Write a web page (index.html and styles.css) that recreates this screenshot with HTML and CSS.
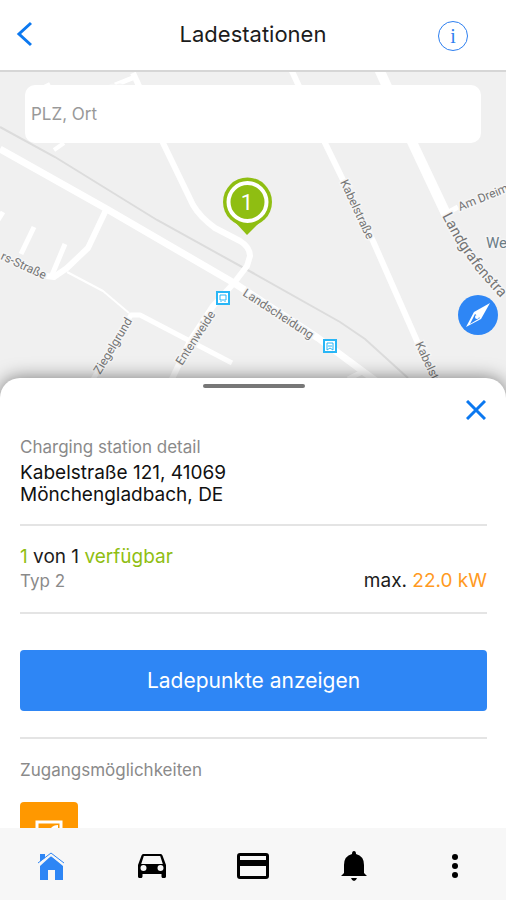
FILE: index.html
```html
<!DOCTYPE html>
<html lang="de">
<head>
  <meta charset="UTF-8">
  <meta name="viewport" content="width=device-width, initial-scale=1.0">
  <title>Ladestationen</title>
  <link rel="stylesheet" href="styles.css">
</head>

<body>

  <header class="topbar">
    <button class="icon-btn back" aria-label="Zurück">
      <svg width="16" height="26" viewBox="0 0 16 26"><path d="M15 2 L3 13 L15 24" fill="none" stroke="#0b78f0" stroke-width="3"/></svg>
    </button>
    <h1>Ladestationen</h1>
    <button class="icon-btn info" aria-label="Info">i</button>
  </header>

  <main>
    <section class="map">
      <svg class="map-canvas" viewBox="0 71 506 330" preserveAspectRatio="xMidYMin slice">
        <!-- Bahnlinie -->
        <path class="rail" d="M0 126 L55 156 L157 219 L253 272 L340 321 L365 338 L408 377"/>

        <!-- Straßen -->
        <g class="roads">
          <path d="M0 148 L105 207 L234 282 L318 337 L380 383" stroke-width="7"/>
          <path d="M133 72 L139 85 L164 144 L193 204 Q200 216 215 227 L240 240 Q250 246 250 255 L247 265 L234 282 L213 305 L190 340 L171 380" stroke-width="6"/>
          <path d="M106 209 L88 247 L67 267 L54 276 L46 275" stroke-width="6"/>
          <path d="M65 243 L52 274" stroke-width="5"/>
          <path d="M34 226 L21 253" stroke-width="5"/>
          <path d="M3 211 L-2 219" stroke-width="5"/>
          <path d="M67 271 L103 290 L129 312" stroke-width="2"/>
          <path d="M92 380 L131 314 L140 314 L232 362" stroke-width="5"/>
          <path d="M115 84 L135 76" stroke-width="5"/>
          <path d="M54 149 L64 142" stroke-width="4"/>
          <path d="M44 86 L50 83" stroke-width="4"/>
          <path d="M291 68 L326 144 L345 183 L373 240 L417 340 L436 382" stroke-width="6"/>
          <path d="M379 68 L413 143 L447 215" stroke-width="10"/>
          <path d="M447 212 L458 206" stroke-width="5"/>
          <path d="M348 378 L362 371" stroke-width="5"/>
        </g>

        <!-- Straßennamen -->
        <g class="labels">
          <text x="109" y="93" font-size="13">33</text>
          <text transform="translate(0 258) rotate(25)" font-size="12">rs-Straße</text>
          <text transform="translate(100 374) rotate(-59)" font-size="12">Ziegelgrund</text>
          <text transform="translate(182 365) rotate(-57)" font-size="12">Entenweide</text>
          <text transform="translate(242 294) rotate(33)" font-size="12">Landscheidung</text>
          <text transform="translate(340 181) rotate(65)" font-size="12">Kabelstraße</text>
          <text transform="translate(415 343) rotate(65)" font-size="12">Kabelst</text>
          <text transform="translate(460 210) rotate(-22)" font-size="12">Am Dreim</text>
          <path id="landgrafen" d="M442 215 L456 241 L478 272 L520 318" fill="none" stroke="none"/>
          <text font-size="15"><textPath href="#landgrafen">Landgrafenstra</textPath></text>
          <text x="486" y="247" font-size="15" fill="#6b7c86">We</text>
        </g>

        <!-- Haltestellen -->
        <g>
          <rect x="217" y="291" width="12" height="12" fill="#fff" stroke="#29b6f6" stroke-width="2"/>
          <path d="M220 294 h6 v5 h-6 z M221 301 v-1 M225 301 v-1" fill="none" stroke="#29b6f6"/>
        </g>
        <g>
          <rect x="324" y="339" width="12" height="12" fill="#fff" stroke="#29b6f6" stroke-width="2"/>
          <path d="M327 349 v-7 h6 v7 M328 345 h4 M327 349 l3 -2 l3 2" fill="none" stroke="#29b6f6"/>
        </g>

        <!-- Marker -->
        <path d="M235 221 L247 234 L260 221 z" fill="#8fbe12"/>
        <circle cx="247.500" cy="201" r="24.500" fill="#8fbe12"/>
        <circle cx="247.500" cy="201" r="19" fill="#8fbe12" stroke="#fff" stroke-width="4"/>
        <text class="pin-count" x="247" y="209" text-anchor="middle">1</text>
      </svg>

      <input class="search" type="text" placeholder="PLZ, Ort" aria-label="PLZ, Ort">

      <button class="icon-btn compass" aria-label="Kompass">
        <svg width="40" height="40" viewBox="0 0 40 40">
          <circle cx="20" cy="20" r="20" fill="#2e86f5"/>
          <path d="M32 8 L23 24 L8 32 L16 17 z" fill="#fff"/>
          <path d="M17 19 L22 23 L12 29 z" fill="#2e86f5"/>
          <circle cx="19" cy="22" r="2" fill="#fff"/>
        </svg>
      </button>
    </section>

    <section class="sheet">
      <div class="handle"></div>
      <button class="icon-btn close" aria-label="Schließen">
        <svg width="20" height="20" viewBox="0 0 20 20"><path d="M1 1 L19 19 M19 1 L1 19" stroke="#0b78f0" stroke-width="3"/></svg>
      </button>

      <div class="station">
        <h2 class="caption">Charging station detail</h2>
        <p class="address">Kabelstraße 121, 41069<br>Mönchengladbach, DE</p>
      </div>

      <div class="status">
        <div>
          <p><span class="green">1</span> von 1 <span class="green">verfügbar</span></p>
          <p class="caption">Typ 2</p>
        </div>
        <p>max. <span class="orange">22.0 kW</span></p>
      </div>

      <div class="action">
        <button class="primary">Ladepunkte anzeigen</button>
      </div>

      <div class="access">
        <h2 class="caption">Zugangsmöglichkeiten</h2>
        <div class="tile">
          <svg width="28" height="36" viewBox="0 0 28 36">
            <rect x="2" y="2" width="24" height="32" fill="none" stroke="#fff" stroke-width="3"/>
            <path d="M14 12 Q16 5 23 5 L23 12 z" fill="#fff"/>
          </svg>
        </div>
      </div>
    </section>
  </main>

  <nav class="tabbar">
    <a href="#" aria-label="Start">
      <svg width="28" height="28" viewBox="0 0 28 28" fill="#2e86f5">
        <path d="M3 2 h5 v5 l-5 4 z"/>
        <path d="M14 4 L26 14 V28 H18 V18 H11 V28 H3 V14 z"/>
        <path d="M1 12 L14 3 L27 12" fill="none" stroke="#f7f7f7" stroke-width="2"/>
        <path d="M1 11 L14 1 L27 11" fill="none" stroke="#2e86f5" stroke-width="1"/>
      </svg>
    </a>
    <a href="#" aria-label="Fahrzeug">
      <svg width="28" height="24" viewBox="0 0 28 24">
        <path fill-rule="evenodd" d="M24.500 1.600 C24.200 0.700 23.400 0 22.400 0 H5.600 C4.600 0 3.800 0.700 3.500 1.600 L0 11 V22.500 C0 23.400 0.600 24 1.500 24 H3 C3.900 24 4.500 23.400 4.500 22.500 V20 H23.500 V22.500 C23.500 23.400 24.100 24 25 24 H26.500 C27.400 24 28 23.400 28 22.500 V11 z M5.800 2 H22.200 L24.800 10 H3.200 z M5.500 17 a3 3 0 1 1 0 -6 a3 3 0 0 1 0 6 z M22.500 17 a3 3 0 1 1 0 -6 a3 3 0 0 1 0 6 z"/>
      </svg>
    </a>
    <a href="#" aria-label="Karte">
      <svg width="32" height="26" viewBox="0 0 32 26">
        <path fill-rule="evenodd" d="M3 0 H29 Q32 0 32 3 V23 Q32 26 29 26 H3 Q0 26 0 23 V3 Q0 0 3 0 z M3 3 V7 H29 V3 z M3 13 V23 H29 V13 z"/>
      </svg>
    </a>
    <a href="#" aria-label="Mitteilungen">
      <svg width="26" height="30" viewBox="0 0 26 30">
        <path d="M13 0 Q15 0 15 3 Q23 5 23 14 V22 L26 25 H0 L3 22 V14 Q3 5 11 3 Q11 0 13 0 z"/>
        <path d="M10 27 H16 Q15 30 13 30 Q11 30 10 27 z"/>
      </svg>
    </a>
    <a href="#" aria-label="Mehr">
      <svg width="6" height="24" viewBox="0 0 6 24"><circle cx="3" cy="3" r="3"/><circle cx="3" cy="12" r="3"/><circle cx="3" cy="21" r="3"/></svg>
    </a>
  </nav>

</body>
</html>
```
FILE: styles.css
```css
* {
  box-sizing: border-box;
}
body {
  font-family: Inter, sans-serif;
  font-size: 19px;
  line-height: 24px;
  color: #1c1c1c;
  background-color: white;
  margin: 0;
  height: 100vh;
  display: flex;
  flex-direction: column;
}
h1, h2, p {
  margin: 0;
  font-weight: 400;
}
.icon-btn {
  padding: 0;
  border: none;
  background: none;
  cursor: pointer;
}
.icon-btn svg, .tabbar svg {
  display: block;
}

/* Kopfzeile */
.topbar {
  display: grid;
  grid-template-columns: 50px 1fr 50px;
  align-items: center;
  height: 72px;
  padding: 0 38px 2px 16px;
  border-bottom: 2px solid #d6d6d6;
}
.topbar h1 {
  font-size: 22px;
  text-align: center;
  padding-left: 22px;
}
.info {
  justify-self: end;
  width: 30px;
  height: 30px;
  margin-top: 4px;
  border: 1px solid #2e7ff0;
  border-radius: 50%;
  color: #2e7ff0;
  font-family: "Liberation Serif", serif;
  font-size: 20px;
  line-height: 26px;
}

/* Karte */
main {
  flex: 1;
  min-height: 0;
  display: flex;
  flex-direction: column;
  overflow: hidden;
}
.map {
  position: relative;
  flex: none;
  height: 326px;
  padding: 13px 25px;
  background-color: #f0f0f0;
  overflow: hidden;
}
.map-canvas {
  position: absolute;
  top: 0;
  left: 0;
  width: 100%;
  height: 100%;
}
.rail {
  fill: none;
  stroke: #dcdcdc;
  stroke-width: 2;
}
.roads path {
  fill: none;
  stroke: white;
  stroke-linejoin: round;
}
.labels {
  font-family: Roboto, sans-serif;
  fill: #757575;
  stroke: #f5f5f5;
  stroke-width: 3px;
  paint-order: stroke;
}
.pin-count {
  font-family: Roboto, sans-serif;
  font-size: 22px;
  fill: white;
}
.search {
  position: relative;
  display: block;
  width: 100%;
  height: 58px;
  padding: 0 6px;
  border: none;
  border-radius: 10px;
  background-color: white;
  font-family: inherit;
  font-size: 17px;
}
.search::placeholder {
  color: #999;
}
.compass {
  position: absolute;
  right: 8px;
  bottom: 63px;
}

/* Detailansicht */
.sheet {
  position: relative;
  flex: 1;
  min-height: 0;
  margin-top: -20px;
  padding: 6px 19px 0 20px;
  background-color: white;
  border-radius: 20px 20px 0 0;
  box-shadow: 0 0 18px rgba(0, 0, 0, 0.5);
}
.handle {
  width: 102px;
  height: 4px;
  margin: 0 auto;
  border-radius: 2px;
  background-color: #777;
}
.close {
  display: block;
  margin: 12px 1px 16px auto;
}
.caption {
  font-size: 17px;
  line-height: 22px;
  color: #8a8a8a;
}
.station {
  padding-bottom: 18px;
  border-bottom: 2px solid #e4e4e4;
}
.address {
  margin-top: 4px;
  font-size: 19px;
  line-height: 22px;
  color: #111;
}
.status {
  display: flex;
  justify-content: space-between;
  align-items: flex-end;
  padding: 19px 0;
  border-bottom: 2px solid #e4e4e4;
}
.status .caption {
  line-height: 24px;
}
.green {
  color: #8fbe12;
}
.orange {
  color: #ff9a1f;
}
.action {
  padding: 36px 0 26px;
  border-bottom: 2px solid #e4e4e4;
}
.primary {
  display: block;
  width: 100%;
  height: 61px;
  border: none;
  border-radius: 4px;
  background-color: #2e86f5;
  color: white;
  font-family: inherit;
  font-size: 21px;
  cursor: pointer;
}
.access {
  padding-top: 20px;
}
.tile {
  display: flex;
  justify-content: center;
  width: 58px;
  height: 58px;
  margin-top: 21px;
  padding-top: 18px;
  border-radius: 4px;
  background-color: #ff9800;
}

/* Navigation unten */
.tabbar {
  position: relative;
  display: grid;
  grid-template-columns: repeat(5, 1fr);
  height: 72px;
  background-color: #f7f7f7;
}
.tabbar a {
  display: flex;
  justify-content: center;
  align-items: center;
  padding-top: 4px;
}
```
